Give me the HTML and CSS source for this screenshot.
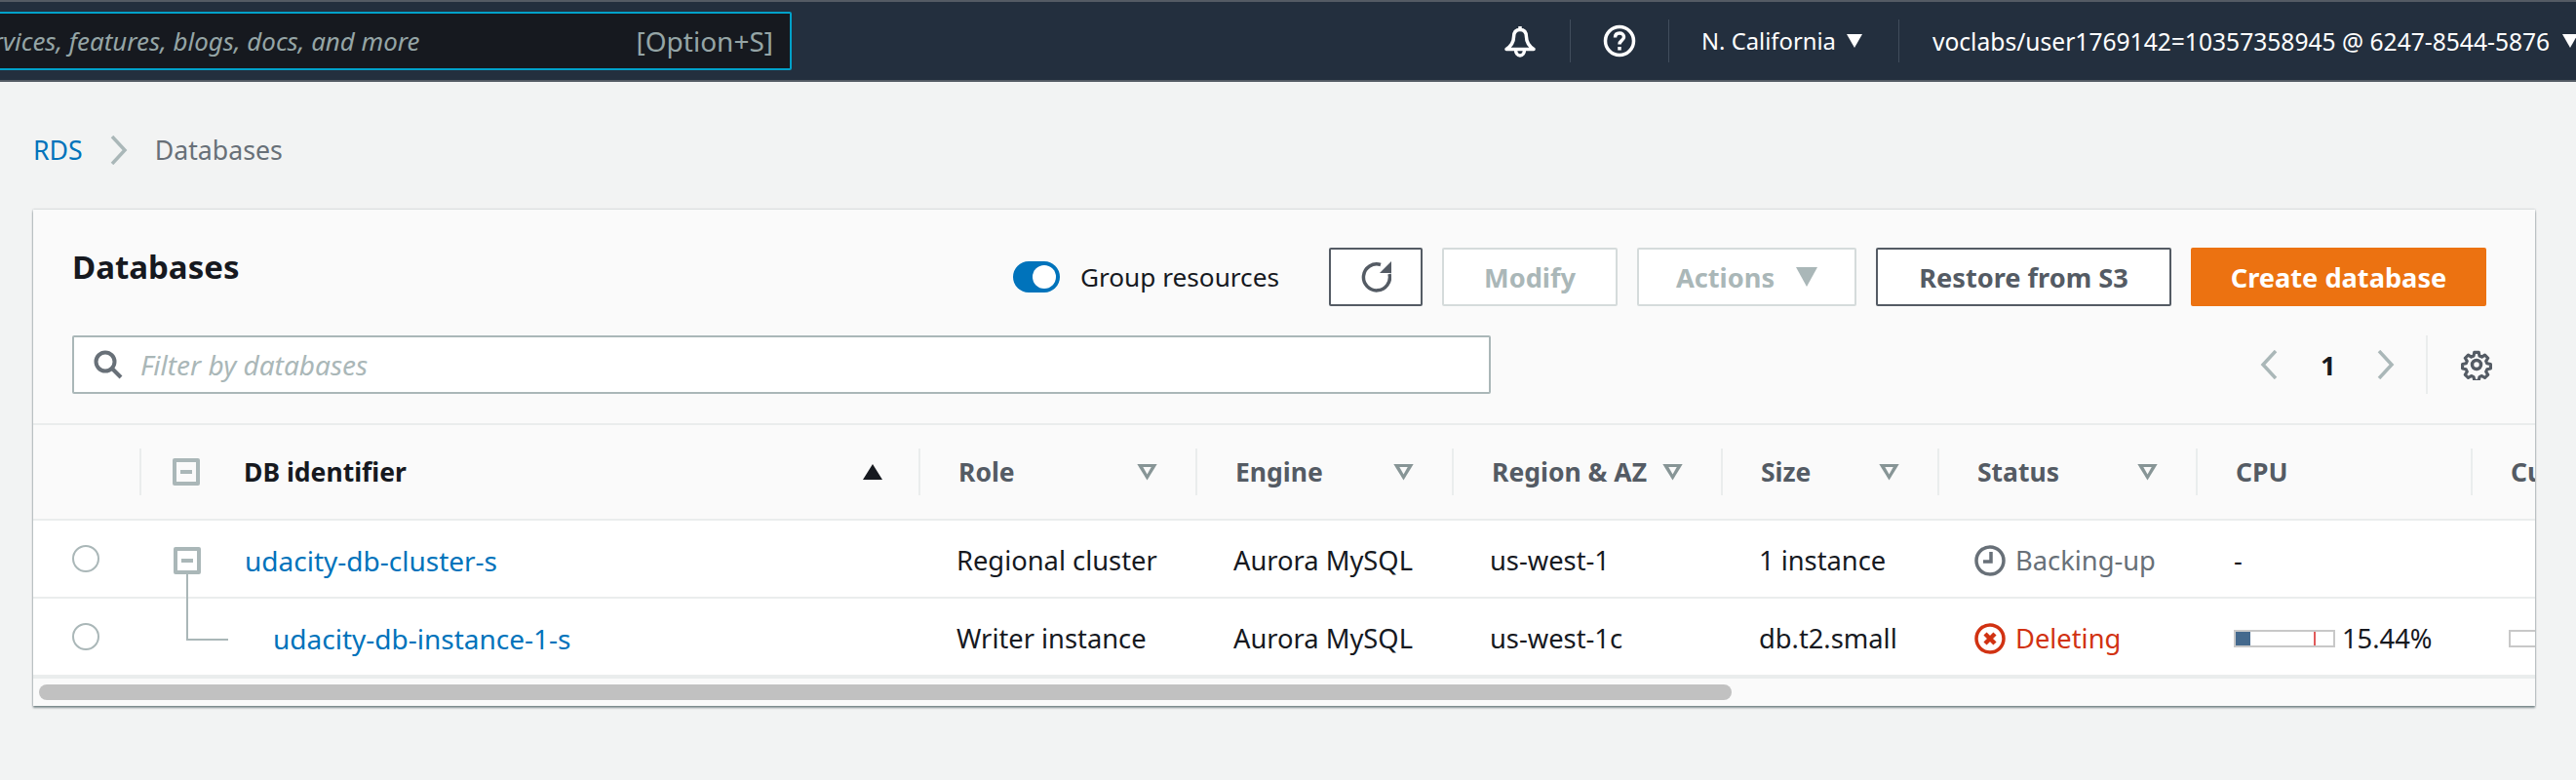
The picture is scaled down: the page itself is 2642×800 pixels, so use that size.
FILE: index.html
```html
<!doctype html>
<html lang="en">
<head>
  <meta charset="UTF-8">
  <title>Databases</title>
  <link rel="stylesheet" href="styles.css">
</head>
<body>
  <header class="topnav">
    <div class="search">
      <span class="search-hint">Search for services, features, blogs, docs, and more</span>
      <span class="search-key">[Option+S]</span>
    </div>
    <div class="nav-icon nav-bell">
      <svg width="34" height="34" viewBox="0 0 34 34" fill="none" stroke="#fff" stroke-width="3.500" stroke-linejoin="round">
        <path d="M17 2v3.500M17 5.500c-4.500 0-6.500 3-6.500 7.500 0 6-2.500 9-7.500 12.500h28c-5-3.500-7.500-6.500-7.500-12.500 0-4.500-2-7.500-6.500-7.500z"/>
        <path d="M12.500 25.500c0 4 2 6.500 4.500 6.500s4.500-2.500 4.500-6.500"/>
      </svg>
    </div>
    <div class="nav-icon nav-help">
      <svg width="34" height="34" viewBox="0 0 34 34" fill="none" stroke="#fff" stroke-width="3.500">
        <circle cx="17" cy="17" r="14.500"/>
        <path d="M12.500 13.500c0-3 2-4.500 4.500-4.500s4.500 1.500 4.500 4c0 3.500-4.500 3.500-4.500 7.500"/>
        <path d="M17 23v3.500"/>
      </svg>
    </div>
    <div class="nav-menu nav-region">N. California<i class="caret"></i></div>
    <div class="nav-menu nav-user">voclabs/user1769142=10357358945 @ 6247-8544-5876<i class="caret"></i></div>
  </header>

  <nav class="crumbs">
    <a href="#">RDS</a>
    <svg class="chevron" width="18" height="30" viewBox="0 0 18 30" fill="none" stroke="#aab7b8" stroke-width="3.500"><path d="M2 1l13 14L2 29"/></svg>
    <span>Databases</span>
  </nav>

  <section class="card">
    <div class="toolbar">
      <h1>Databases</h1>
      <label class="group-toggle"><i class="toggle"></i>Group resources</label>
      <button class="btn btn-refresh">
        <svg width="32" height="32" viewBox="0 0 32 32" fill="none">
          <path d="M21 3.500A13.500 13.500 0 1 0 30 13" stroke="#545b64" stroke-width="3.500"/>
          <path d="M32 0v12H20z" fill="#545b64"/>
        </svg>
      </button>
      <button class="btn btn-off btn-modify">Modify</button>
      <button class="btn btn-off btn-actions">Actions<i class="caret caret-off"></i></button>
      <button class="btn btn-restore">Restore from S3</button>
      <button class="btn btn-create">Create database</button>
    </div>
    <div class="filterbar">
      <div class="filter">
        <svg width="30" height="30" viewBox="0 0 30 30" fill="none" stroke="#687078" stroke-width="4"><circle cx="12" cy="12" r="9.500"/><path d="M19 19l9 9"/></svg>
        <span>Filter by databases</span>
      </div>
      <div class="pager">
        <svg class="chevron" width="18" height="30" viewBox="0 0 18 30" fill="none" stroke="#aab7b8" stroke-width="3.500"><path d="M16 1L3 15l13 14"/></svg>
        <b>1</b>
        <svg class="chevron" width="18" height="30" viewBox="0 0 18 30" fill="none" stroke="#aab7b8" stroke-width="3.500"><path d="M2 1l13 14L2 29"/></svg>
        <i class="pager-sep"></i>
        <svg class="gear" width="32" height="32" viewBox="0 0 32 32" fill="none" stroke="#545b64" stroke-width="3.500" stroke-linejoin="round">
          <path d="M13.500 2h5l.8 4 2.700 1.200 3.500-2.200 3.500 3.500-2.200 3.500 1.200 2.700 4 .8v5l-4 .8-1.200 2.700 2.200 3.500-3.500 3.500-3.500-2.200-2.700 1.200-.8 4h-5l-.8-4-2.700-1.200-3.500 2.200-3.500-3.500 2.200-3.500-1.200-2.700-4-.8v-5l4-.8 1.200-2.700-2.200-3.500 3.500-3.500 3.500 2.200 2.700-1.200z" transform="translate(1.600 1.600) scale(.9)"/>
          <circle cx="16" cy="16" r="4.500"/>
        </svg>
      </div>
    </div>

    <div class="table">
      <div class="row row-head">
        <div class="cell"></div>
        <div class="cell cell-sep cell-id"><i class="tree-box tree-box-head"></i><span class="head-main">DB identifier</span><i class="sort-up"></i></div>
        <div class="cell cell-sep">Role<i class="sort-down"></i></div>
        <div class="cell cell-sep">Engine<i class="sort-down"></i></div>
        <div class="cell cell-sep">Region &amp; AZ<i class="sort-down"></i></div>
        <div class="cell cell-sep">Size<i class="sort-down"></i></div>
        <div class="cell cell-sep">Status<i class="sort-down"></i></div>
        <div class="cell cell-sep">CPU</div>
        <div class="cell cell-sep">Current activity</div>
      </div>
      <div class="row">
        <div class="cell cell-radio"><i class="radio"></i></div>
        <div class="cell cell-id"><i class="tree-box tree-box-open"></i><a href="#">udacity-db-cluster-s</a></div>
        <div class="cell">Regional cluster</div>
        <div class="cell">Aurora MySQL</div>
        <div class="cell">us-west-1</div>
        <div class="cell">1 instance</div>
        <div class="cell status status-wait">
          <svg width="32" height="32" viewBox="0 0 32 32" fill="none" stroke="#687078" stroke-width="3.500"><circle cx="16" cy="16" r="14"/><path d="M17 7v10H9" stroke-width="3.500"/></svg>
          Backing-up
        </div>
        <div class="cell">-</div>
        <div class="cell"></div>
      </div>
      <div class="row row-last">
        <div class="cell cell-radio"><i class="radio"></i></div>
        <div class="cell cell-id cell-child"><a href="#">udacity-db-instance-1-s</a></div>
        <div class="cell">Writer instance</div>
        <div class="cell">Aurora MySQL</div>
        <div class="cell">us-west-1c</div>
        <div class="cell">db.t2.small</div>
        <div class="cell status status-bad">
          <svg width="32" height="32" viewBox="0 0 32 32" fill="none" stroke="#d13212" stroke-width="3.500"><circle cx="16" cy="16" r="14"/><path d="M11 11l10 10M21 11L11 21" stroke-width="4.500"/></svg>
          Deleting
        </div>
        <div class="cell cell-cpu">
          <div class="meter"><i class="meter-fill" style="width: 15.44%"></i><i class="meter-mark"></i></div>
          15.44%
        </div>
        <div class="cell cell-cpu"><div class="meter"></div></div>
      </div>
    </div>
    <div class="hscroll"><div class="hscroll-thumb"></div></div>
  </section>
</body>
</html>
```

FILE: styles.css
```css
* {
  box-sizing: border-box;
}

html, body {
  height: 100%;
}

body {
  margin: 0;
  background: #f2f3f3;
  color: #16191f;
  font-family: "Noto Sans", "Open Sans", sans-serif;
  font-size: 27.3px;
  overflow: hidden;
}

a {
  color: #0073bb;
  text-decoration: none;
}

i {
  display: block;
  font-style: normal;
}

/* top bar */
.topnav {
  height: 84px;
  display: flex;
  align-items: center;
  background: #232f3e;
  border-top: 2px solid #545b64;
  border-bottom: 2px solid #545b64;
  color: #fff;
}

.search {
  flex: none;
  width: 1012px;
  height: 60px;
  margin-left: -200px;
  padding-right: 17px;
  display: flex;
  align-items: center;
  justify-content: space-between;
  background: #16191f;
  border: 2px solid #00a1c9;
  border-radius: 2px;
  color: #95a5a6;
  white-space: nowrap;
}

.search-hint {
  margin-left: auto;
  margin-right: 222px;
  font-size: 25.900px;
  font-style: italic;
}

.search-key {
  font-size: 28px;
}

.nav-icon {
  flex: none;
  height: 44px;
  display: flex;
  align-items: center;
}

.nav-bell {
  margin-left: 730px;
  padding-right: 34px;
}

.nav-help {
  padding: 0 33px;
  border-left: 1px solid #414d5c;
  border-right: 1px solid #414d5c;
}

.nav-menu {
  flex: none;
  height: 44px;
  display: flex;
  align-items: center;
  font-size: 24px;
  white-space: nowrap;
}

.nav-region {
  padding: 0 37px 0 33px;
  border-right: 1px solid #414d5c;
  font-size: 23.800px;
}

.nav-region .caret {
  margin-left: 11px;
}

.nav-user {
  padding-left: 34px;
  font-size: 24.600px;
}

.caret {
  width: 0;
  height: 0;
  margin-left: 13px;
  border-style: solid;
  border-width: 14px 8px 0 8px;
  border-color: #fff transparent transparent transparent;
}

/* breadcrumb */
.crumbs {
  height: 131px;
  padding: 8px 0 0 34px;
  display: flex;
  align-items: center;
  gap: 28px;
  color: #687078;
  font-size: 26.700px;
}

/* card */
.card {
  width: 2566px;
  margin-left: 34px;
  background: #fafafa;
  box-shadow: 0 2px 2px rgba(0, 28, 36, .45), 0 0 2px rgba(0, 28, 36, .3);
  overflow: hidden;
}

.toolbar {
  padding: 39px 50px 0 40px;
  display: flex;
  align-items: center;
  gap: 20px;
}

h1 {
  margin: 0 auto 20px 0;
  font-size: 33px;
  line-height: 40px;
  font-weight: 700;
}

.group-toggle {
  margin-right: 31px;
  display: flex;
  align-items: center;
  gap: 21px;
  font-size: 26.200px;
}

.toggle {
  width: 48px;
  height: 32px;
  padding: 4px;
  display: flex;
  justify-content: flex-end;
  background: #0073bb;
  border-radius: 16px;
}

.toggle::after {
  content: '';
  width: 24px;
  height: 24px;
  background: #fff;
  border-radius: 50%;
}

.btn {
  height: 60px;
  padding: 0;
  display: flex;
  align-items: center;
  justify-content: center;
  background: #fff;
  border: 2px solid #545b64;
  border-radius: 2px;
  color: #545b64;
  font-family: inherit;
  font-size: 27.200px;
  font-weight: 700;
}

.btn-refresh {
  width: 96px;
}

.btn-off {
  border-color: #d5dbdb;
  color: #aab7b8;
}

.btn-modify {
  width: 180px;
}

.btn-actions {
  width: 225px;
}

.caret-off {
  margin-left: 22px;
  border-width: 20px 11px 0 11px;
  border-top-color: #aab7b8;
}

.btn-restore {
  width: 303px;
}

.btn-create {
  width: 303px;
  background: #ec7211;
  border-color: #ec7211;
  color: #fff;
}

.filterbar {
  padding: 30px 44px 30px 40px;
  display: flex;
  align-items: center;
  justify-content: space-between;
  border-bottom: 2px solid #eaeded;
}

.filter {
  width: 1455px;
  height: 60px;
  padding-left: 20px;
  display: flex;
  align-items: center;
  gap: 18px;
  background: #fff;
  border: 2px solid #aab7b8;
  border-radius: 2px;
  color: #aab7b8;
  font-size: 28px;
  font-style: italic;
}

.pager {
  display: flex;
  align-items: center;
  height: 60px;
}

.pager b {
  width: 14px;
  margin: 0 44px;
  font-weight: 700;
  color: #16191f;
}

.pager-sep {
  width: 2px;
  height: 60px;
  margin: 0 34px 0 32px;
  background: #eaeded;
}

/* table */
.table {
  border-bottom: 4px solid #eaeded;
}

.row {
  height: 80px;
  display: grid;
  grid-template-columns: 109px 799px 284px 263px 276px 222px 265px 282px 200px;
  align-items: center;
  background: #fff;
  border-bottom: 2px solid #eaeded;
  white-space: nowrap;
}

.row-head {
  height: 98px;
  background: #fafafa;
  color: #545b64;
  font-size: 26.500px;
  font-weight: 700;
}

.row-last {
  height: 78px;
  border-bottom: 0;
}

.cell {
  height: 48px;
  padding-left: 39px;
  padding-top: 3px;
  display: flex;
  align-items: center;
  overflow: hidden;
  position: relative;
}

.row-head .cell {
  padding: 0 39px 0 39px;
  justify-content: flex-start;
}

.cell-sep {
  border-left: 2px solid #eaeded;
}

.cell-id {
  padding-left: 35px;
  gap: 45px;
  overflow: visible;
  font-size: 28px;
}

.row-head .cell-id {
  padding-left: 32px;
  font-size: 26.500px;
}

.cell-child {
  padding-left: 137px;
}

.cell-radio {
  padding-left: 40px;
  padding-top: 0;
}

.head-main {
  color: #16191f;
}

.radio {
  width: 28px;
  height: 28px;
  background: #fff;
  border: 2px solid #aab7b8;
  border-radius: 50%;
}

.tree-box {
  flex: none;
  width: 28px;
  height: 28px;
  display: flex;
  align-items: center;
  justify-content: center;
  border: 4px solid #aab7b8;
  border-radius: 2px;
  position: relative;
}

.tree-box::before {
  content: '';
  width: 12px;
  height: 4px;
  background: #aab7b8;
}

/* the line that joins a cluster to its instances */
.tree-box-open::after {
  content: '';
  position: absolute;
  left: 9px;
  top: 24px;
  width: 41px;
  height: 66px;
  border-left: 2px solid #aab7b8;
  border-bottom: 2px solid #aab7b8;
}

.sort-up {
  width: 0;
  height: 0;
  margin-left: auto;
  margin-right: -2px;
  border-style: solid;
  border-width: 0 10px 16px 10px;
  border-color: transparent transparent #16191f transparent;
}

.sort-down {
  width: 21px;
  height: 17px;
  margin-left: auto;
  background: #879596;
  clip-path: polygon(0 0, 100% 0, 50% 100%);
  position: relative;
}

.sort-down::after {
  content: '';
  position: absolute;
  left: 6px;
  top: 3px;
  width: 9px;
  height: 8px;
  background: #fafafa;
  clip-path: polygon(0 0, 100% 0, 50% 100%);
}

.status {
  padding-left: 38px;
  gap: 10px;
}

.status-wait {
  color: #687078;
}

.status-bad {
  color: #d13212;
}

.cell-cpu {
  gap: 7px;
}

.meter {
  flex: none;
  width: 104px;
  height: 18px;
  border: 2px solid #c8c8c8;
  position: relative;
}

.meter-fill {
  height: 100%;
  background: #44698d;
}

.meter-mark {
  position: absolute;
  left: 80px;
  top: 0;
  width: 2px;
  height: 14px;
  background: #e05a5a;
}

.hscroll {
  height: 28px;
  padding: 6px 0 6px 6px;
}

.hscroll-thumb {
  width: 1736px;
  height: 16px;
  background: #c1c1c1;
  border-radius: 8px;
}
```
